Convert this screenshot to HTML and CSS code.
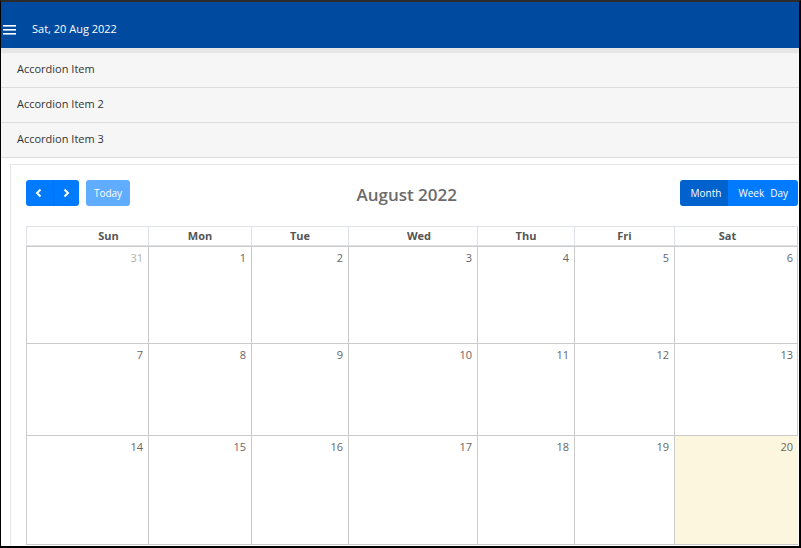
FILE: index.html
```html
<!DOCTYPE html>
<html lang="en">
<head>
	<meta charset="UTF-8">
	<title>Calendar</title>
	<link rel="stylesheet" href="styles.css">
</head>
<body>
	<div class="frame">
		<div class="topbar">
			<svg class="burger" width="14" height="10" viewBox="0 0 14 10">
				<rect x="0" y="0" width="13" height="1.6" fill="#fff"/>
				<rect x="0" y="4" width="13" height="1.6" fill="#fff"/>
				<rect x="0" y="8" width="13" height="1.6" fill="#fff"/>
			</svg>
			<span class="date">Sat, 20 Aug 2022</span>
		</div>

		<div class="accordion">
			<div class="acc-item">Accordion Item</div>
			<div class="acc-item">Accordion Item 2</div>
			<div class="acc-item">Accordion Item 3</div>
		</div>

		<div class="content">
			<div class="card">
				<div class="toolbar">
					<div class="tb-left">
						<div class="btn-group">
							<button class="btn btn-icon">
								<svg width="10" height="10" viewBox="0 0 10 10"><path d="M6.5 1.5 3 5l3.5 3.5" fill="none" stroke="#fff" stroke-width="2"/></svg>
							</button>
							<button class="btn btn-icon">
								<svg width="10" height="10" viewBox="0 0 10 10"><path d="M3.5 1.5 7 5 3.5 8.5" fill="none" stroke="#fff" stroke-width="2"/></svg>
							</button>
						</div>
						<button class="btn btn-today">Today</button>
					</div>
					<h2 class="title">August 2022</h2>
					<div class="btn-group">
						<button class="btn btn-month active">Month</button>
						<button class="btn btn-week">Week</button>
						<button class="btn btn-day">Day</button>
					</div>
				</div>

				<div class="grid">
					<div class="dow dow-sun">Sun</div>
					<div class="dow">Mon</div>
					<div class="dow">Tue</div>
					<div class="dow dow-wed">Wed</div>
					<div class="dow">Thu</div>
					<div class="dow">Fri</div>
					<div class="dow dow-sat">Sat</div>

					<div class="day other">31</div>
					<div class="day">1</div>
					<div class="day">2</div>
					<div class="day">3</div>
					<div class="day">4</div>
					<div class="day">5</div>
					<div class="day">6</div>

					<div class="day">7</div>
					<div class="day">8</div>
					<div class="day">9</div>
					<div class="day">10</div>
					<div class="day">11</div>
					<div class="day">12</div>
					<div class="day">13</div>

					<div class="day last">14</div>
					<div class="day last">15</div>
					<div class="day last">16</div>
					<div class="day last">17</div>
					<div class="day last">18</div>
					<div class="day last">19</div>
					<div class="day last today">20</div>
				</div>
			</div>
		</div>
	</div>
</body>
</html>
```

FILE: styles.css
```css
html, body{
	margin: 0;
	padding: 0;
	background: #fff;
}
.frame{
	width: 801px;
	height: 548px;
	box-sizing: border-box;
	border-top: 2px solid #2b2b2b;
	border-left: 1px solid #000;
	border-right: 2px solid #000;
	border-bottom: 2px solid #000;
	overflow: hidden;
	font-family: "Open Sans", "Noto Sans", sans-serif;
	background: #fff;
}
.topbar{
	height: 46px;
	background: #004a9f;
	display: flex;
	align-items: flex-start;
	padding-left: 2px;
	color: #fff;
}
.burger{
	display: block;
	margin-top: 23px;
}
.date{
	font-size: 11px;
	line-height: 15px;
	margin-left: 15px;
	margin-top: 19px;
}
.accordion{
	border-top: 5px solid #e6e6e6;
	background: #f6f6f6;
}
.acc-item{
	box-sizing: border-box;
	height: 35px;
	padding-bottom: 3px;
	border-bottom: 1px solid #dcdcdc;
	padding-left: 16px;
	display: flex;
	align-items: center;
	font-size: 11px;
	color: #333;
}
.content{
	padding: 6px 0 0 9px;
}
.card{
	width: 772px;
	padding: 15px;
	border: 1px solid #e6e6e6;
}
.toolbar{
	display: flex;
	justify-content: space-between;
	align-items: center;
	height: 26px;
	margin-bottom: 20px;
}
.tb-left{
	display: flex;
	gap: 7px;
}
.btn-group{
	display: flex;
}
.btn{
	height: 26px;
	border: none;
	margin: 0;
	padding: 0 10px;
	background: #007bff;
	color: #fff;
	font-family: inherit;
	font-size: 10px;
	display: flex;
	align-items: center;
	justify-content: center;
}
.btn-group .btn:first-child{
	border-radius: 3px 0 0 3px;
}
.btn-group .btn:last-child{
	border-radius: 0 3px 3px 0;
}
.btn-icon{
	width: 26.5px;
	padding: 0;
}
.btn-icon + .btn-icon{
	border-left: 1px solid #0a6fe0;
}
.btn-today{
	width: 44px;
	padding: 0;
	border-radius: 3px;
	opacity: .62;
}
.btn-month{
	width: 48px;
	padding: 0 0 0 3px;
}
.btn.active{
	background: #0062cc;
}
.btn-week{
	padding: 0 3px 0 10px;
}
.btn-day{
	padding: 0 10px 0 3px;
}
.title{
	margin: 4px 0 0;
	font-size: 17px;
	line-height: 20px;
	font-weight: 600;
	color: #6b6b6b;
	padding-left: 3px;
}
.grid{
	display: grid;
	grid-template-columns: 122px 103px 97px 129px 97px 100px 124px;
	grid-template-rows: 20px 97px 92px 110px;
	border-right: 1px solid #ccc;
}
.dow{
	border-top: 1px solid #dee2e6;
	border-left: 1px solid #dee2e6;
	border-bottom: 1px solid #dee2e6;
	font-size: 11px;
	font-weight: 700;
	color: #555;
	text-align: center;
	line-height: 18px;
}
.dow-sun{
	padding-left: 42px;
}
.dow-wed{
	padding-left: 12px;
}
.dow-sat{
	padding-right: 18px;
}
.day{
	border-top: 1px solid #cbcbcb;
	border-left: 1px solid #cbcbcb;
	text-align: right;
	padding: 3px 5px 0 0;
	font-size: 11px;
	color: #666;
}
.day.last{
	border-bottom: 1px solid #cbcbcb;
}
.day.other{
	color: #b0b0b0;
}
.day.today{
	background: #fdf6df;
}
```
